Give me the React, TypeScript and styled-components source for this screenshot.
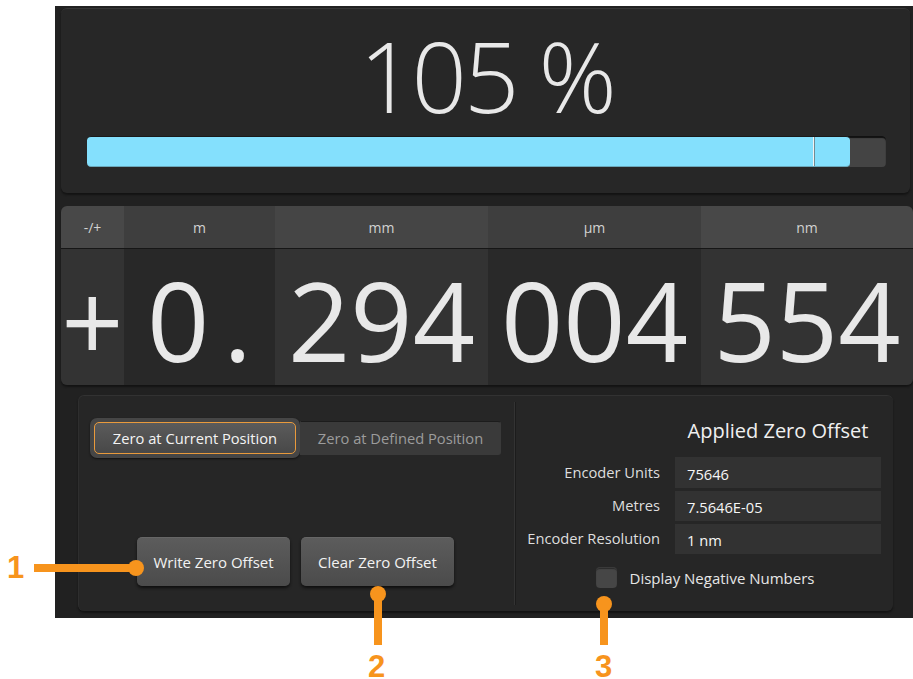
import React from "react";
import styled, { createGlobalStyle } from "styled-components";

const uiFont = `"Open Sans", "Noto Sans", "DejaVu Sans", sans-serif`;
const accent = "#f7941d";

const GlobalStyle = createGlobalStyle`
  html, body {
    margin: 0;
    padding: 0;
    background: #ffffff;
  }
  * {
    box-sizing: border-box;
  }
`;

type Column = {
  unit: string;
  value: string;
  width: number;
  head: string;
  body: string;
  spread?: boolean;
};

const columns: Column[] = [
  { unit: "-/+", value: "+", width: 63, head: "#484848", body: "#333333" },
  { unit: "m", value: "0.", width: 151, head: "#3e3e3e", body: "#282828", spread: true },
  { unit: "mm", value: "294", width: 213, head: "#454545", body: "#333333" },
  { unit: "µm", value: "004", width: 213, head: "#3e3e3e", body: "#292929" },
  { unit: "nm", value: "554", width: 212, head: "#484848", body: "#333333" },
];

const offsetRows = [
  { label: "Encoder Units", value: "75646", height: 31 },
  { label: "Metres", value: "7.5646E-05", height: 30 },
  { label: "Encoder Resolution", value: "1 nm", height: 30 },
];

const Figure = styled.div`
  position: relative;
  width: 913px;
  height: 679px;
  font-family: ${uiFont};
`;

const Screen = styled.div`
  display: flex;
  flex-direction: column;
  width: 858px;
  height: 612px;
  margin: 6px 0 0 55px;
  padding: 2px 0 0 6px;
  background: #212121;
`;

const OverridePanel = styled.section`
  display: flex;
  flex-direction: column;
  height: 185px;
  margin-right: 3px;
  padding: 16px 24px 0 26px;
  background: #272727;
  border-radius: 6px;
  border-top: 1px solid #363636;
  box-shadow: 0 2px 2px #141414;
`;

const Percent = styled.div`
  height: 100px;
  line-height: 100px;
  font-size: 97px;
  font-weight: 300;
  color: #e8e8e8;
  text-align: center;
  letter-spacing: -3px;
`;

const Track = styled.div`
  position: relative;
  height: 31px;
  margin-top: 11px;
  background: #444444;
  border-radius: 4px;
  box-shadow: inset 0 2px 1px #111111;
  overflow: hidden;
`;

const Fill = styled.div`
  height: 100%;
  background: #84e0fd;
  border-radius: 4px;
  border-top: 1px solid #1a1a1a;
  border-bottom: 1px solid #6aa8bb;
`;

const Marker = styled.div`
  position: absolute;
  top: 1px;
  bottom: 1px;
  width: 2px;
  background: #6f8c96;
  border-left: 1px solid #f2f2f2;
`;

const Readout = styled.section`
  display: flex;
  height: 179px;
  margin-top: 13px;
  border-radius: 6px;
  box-shadow: 0 2px 2px #141414;
`;

const DigitColumn = styled.div<{ $width: number }>`
  display: flex;
  flex-direction: column;
  flex: 0 0 ${({ $width }) => $width}px;

  &:first-child > * {
    border-radius: 6px 0 0 0;
  }
  &:first-child > *:last-child {
    border-radius: 0 0 0 6px;
  }
  &:last-child > * {
    border-radius: 0 6px 0 0;
  }
  &:last-child > *:last-child {
    border-radius: 0 0 6px 0;
  }
`;

const UnitHead = styled.div<{ $shade: string }>`
  height: 43px;
  line-height: 44px;
  text-align: center;
  font-size: 14px;
  color: #d2d2d2;
  background: ${({ $shade }) => $shade};
  border-bottom: 1px solid #161616;
`;

const DigitCell = styled.div<{ $shade: string; $spread?: boolean }>`
  display: flex;
  align-items: center;
  justify-content: center;
  height: 136px;
  padding-top: 4px;
  font-size: 109px;
  line-height: 1;
  color: #e8e8e8;
  white-space: nowrap;
  background: ${({ $shade }) => $shade};
  letter-spacing: ${({ $spread }) => ($spread ? "14px" : "0")};
  padding-left: ${({ $spread }) => ($spread ? "14px" : "0")};
`;

const ZeroPanel = styled.section`
  display: grid;
  grid-template-columns: 435px 1px 1fr;
  width: 815px;
  height: 216px;
  margin: 10px 0 0 17px;
  background: #262626;
  border-radius: 6px;
  border-top: 1px solid #323232;
  border-left: 1px solid #2e2e2e;
  box-shadow: 0 2px 2px #141414;
`;

const ModeSide = styled.div`
  display: flex;
  flex-direction: column;
  padding: 22px 0 0 11px;
`;

const ModeToggle = styled.div`
  display: flex;
  align-items: center;
`;

const ModeRing = styled.div`
  padding: 4px;
  background: #464646;
  border-radius: 7px;
  box-shadow: 0 1px 2px #111111;
`;

const ModeOption = styled.div<{ $active?: boolean }>`
  display: flex;
  align-items: center;
  justify-content: center;
  width: ${({ $active }) => ($active ? "202px" : "201px")};
  height: ${({ $active }) => ($active ? "32px" : "34px")};
  font-size: 14.7px;
  color: ${({ $active }) => ($active ? "#f4f4f4" : "#9c9c9c")};
  background: ${({ $active }) =>
    $active ? "linear-gradient(#5b5b5b, #484848)" : "#3a3a3a"};
  border: 1px solid ${({ $active }) => ($active ? "#e99a3c" : "#3a3a3a")};
  border-top-color: ${({ $active }) => ($active ? "#e99a3c" : "#1c1c1c")};
  border-radius: ${({ $active }) => ($active ? "5px" : "0 3px 3px 0")};
`;

const ActionRow = styled.div`
  display: flex;
  gap: 11px;
  margin: 79px 0 0 47px;
`;

const ActionButton = styled.button`
  width: 153px;
  height: 49px;
  padding: 0;
  font-family: ${uiFont};
  font-size: 15px;
  color: #f2f2f2;
  background: linear-gradient(#5c5c5c, #4b4b4b);
  border: none;
  border-top: 1px solid #666666;
  border-radius: 5px;
  box-shadow: 0 2px 3px #0f0f0f;
`;

const Divider = styled.div`
  margin: 6px 0;
  background: #333333;
  box-shadow: 1px 0 0 #1c1c1c;
`;

const OffsetSide = styled.div`
  display: flex;
  flex-direction: column;
  padding: 21px 12px 0 0;
`;

const OffsetGrid = styled.div`
  display: grid;
  grid-template-columns: 1fr 206px;
  column-gap: 15px;
  row-gap: 3px;
  align-items: center;
`;

const OffsetTitle = styled.div`
  grid-column: 2;
  height: 36px;
  margin-bottom: 1px;
  text-align: center;
  font-size: 20px;
  line-height: 28px;
  color: #f0f0f0;
`;

const OffsetLabel = styled.div`
  grid-column: 1;
  text-align: right;
  font-size: 14.7px;
  color: #dedede;
  padding-bottom: 2px;
`;

const OffsetValue = styled.div<{ $height: number }>`
  grid-column: 2;
  display: flex;
  align-items: center;
  height: ${({ $height }) => $height}px;
  padding: 2px 0 0 12px;
  font-size: 14.7px;
  color: #f6f6f6;
  background: #323232;
`;

const NegativeToggle = styled.label`
  display: flex;
  align-items: center;
  justify-content: center;
  gap: 13px;
  margin: 13px -12px 0 0;
  padding-left: 2px;
  font-size: 15px;
  color: #e6e6e6;
`;

const CheckBox = styled.span`
  width: 21px;
  height: 21px;
  background: #464646;
  border-radius: 4px;
  border-top: 1px solid #3a3a3a;
  box-shadow: inset 0 1px 1px #2a2a2a;
`;

/* orange numbered callouts over the screen */

const CalloutNumber = styled.div<{ $x: number; $y: number }>`
  position: absolute;
  left: ${({ $x }) => $x}px;
  top: ${({ $y }) => $y}px;
  font-family: "Liberation Sans", Arial, sans-serif;
  font-weight: 700;
  font-size: 31px;
  line-height: 24px;
  color: ${accent};
`;

const Leader = styled.div<{ $x: number; $y: number; $w: number; $h: number }>`
  position: absolute;
  left: ${({ $x }) => $x}px;
  top: ${({ $y }) => $y}px;
  width: ${({ $w }) => $w}px;
  height: ${({ $h }) => $h}px;
  background: ${accent};
`;

const LeaderDot = styled.div<{ $x: number; $y: number }>`
  position: absolute;
  left: ${({ $x }) => $x - 8}px;
  top: ${({ $y }) => $y - 8}px;
  width: 16px;
  height: 16px;
  border-radius: 50%;
  background: ${accent};
`;

export default function App() {
  const override = 105;
  const max = 110;

  return (
    <Figure>
      <GlobalStyle />
      <Screen>
        <OverridePanel>
          <Percent>{override} %</Percent>
          <Track>
            <Fill style={{ width: `${(override / max) * 100}%` }} />
            <Marker style={{ left: `${(100 / max) * 100}%` }} />
          </Track>
        </OverridePanel>

        <Readout>
          {columns.map((col) => (
            <DigitColumn key={col.unit} $width={col.width}>
              <UnitHead $shade={col.head}>{col.unit}</UnitHead>
              <DigitCell $shade={col.body} $spread={col.spread}>
                {col.value}
              </DigitCell>
            </DigitColumn>
          ))}
        </Readout>

        <ZeroPanel>
          <ModeSide>
            <ModeToggle>
              <ModeRing>
                <ModeOption $active>Zero at Current Position</ModeOption>
              </ModeRing>
              <ModeOption>Zero at Defined Position</ModeOption>
            </ModeToggle>
            <ActionRow>
              <ActionButton>Write Zero Offset</ActionButton>
              <ActionButton>Clear Zero Offset</ActionButton>
            </ActionRow>
          </ModeSide>

          <Divider />

          <OffsetSide>
            <OffsetGrid>
              <OffsetTitle>Applied Zero Offset</OffsetTitle>
              {offsetRows.map((row) => (
                <React.Fragment key={row.label}>
                  <OffsetLabel>{row.label}</OffsetLabel>
                  <OffsetValue $height={row.height}>{row.value}</OffsetValue>
                </React.Fragment>
              ))}
            </OffsetGrid>
            <NegativeToggle>
              <CheckBox />
              Display Negative Numbers
            </NegativeToggle>
          </OffsetSide>
        </ZeroPanel>
      </Screen>

      <CalloutNumber $x={7} $y={550}>1</CalloutNumber>
      <Leader $x={34} $y={558} $w={102} $h={8} />
      <LeaderDot $x={136} $y={562} />

      <LeaderDot $x={378} $y={588} />
      <Leader $x={374} $y={588} $w={8} $h={51} />
      <CalloutNumber $x={368} $y={649}>2</CalloutNumber>

      <LeaderDot $x={604} $y={598} />
      <Leader $x={600} $y={598} $w={8} $h={41} />
      <CalloutNumber $x={595} $y={649}>3</CalloutNumber>
    </Figure>
  );
}
